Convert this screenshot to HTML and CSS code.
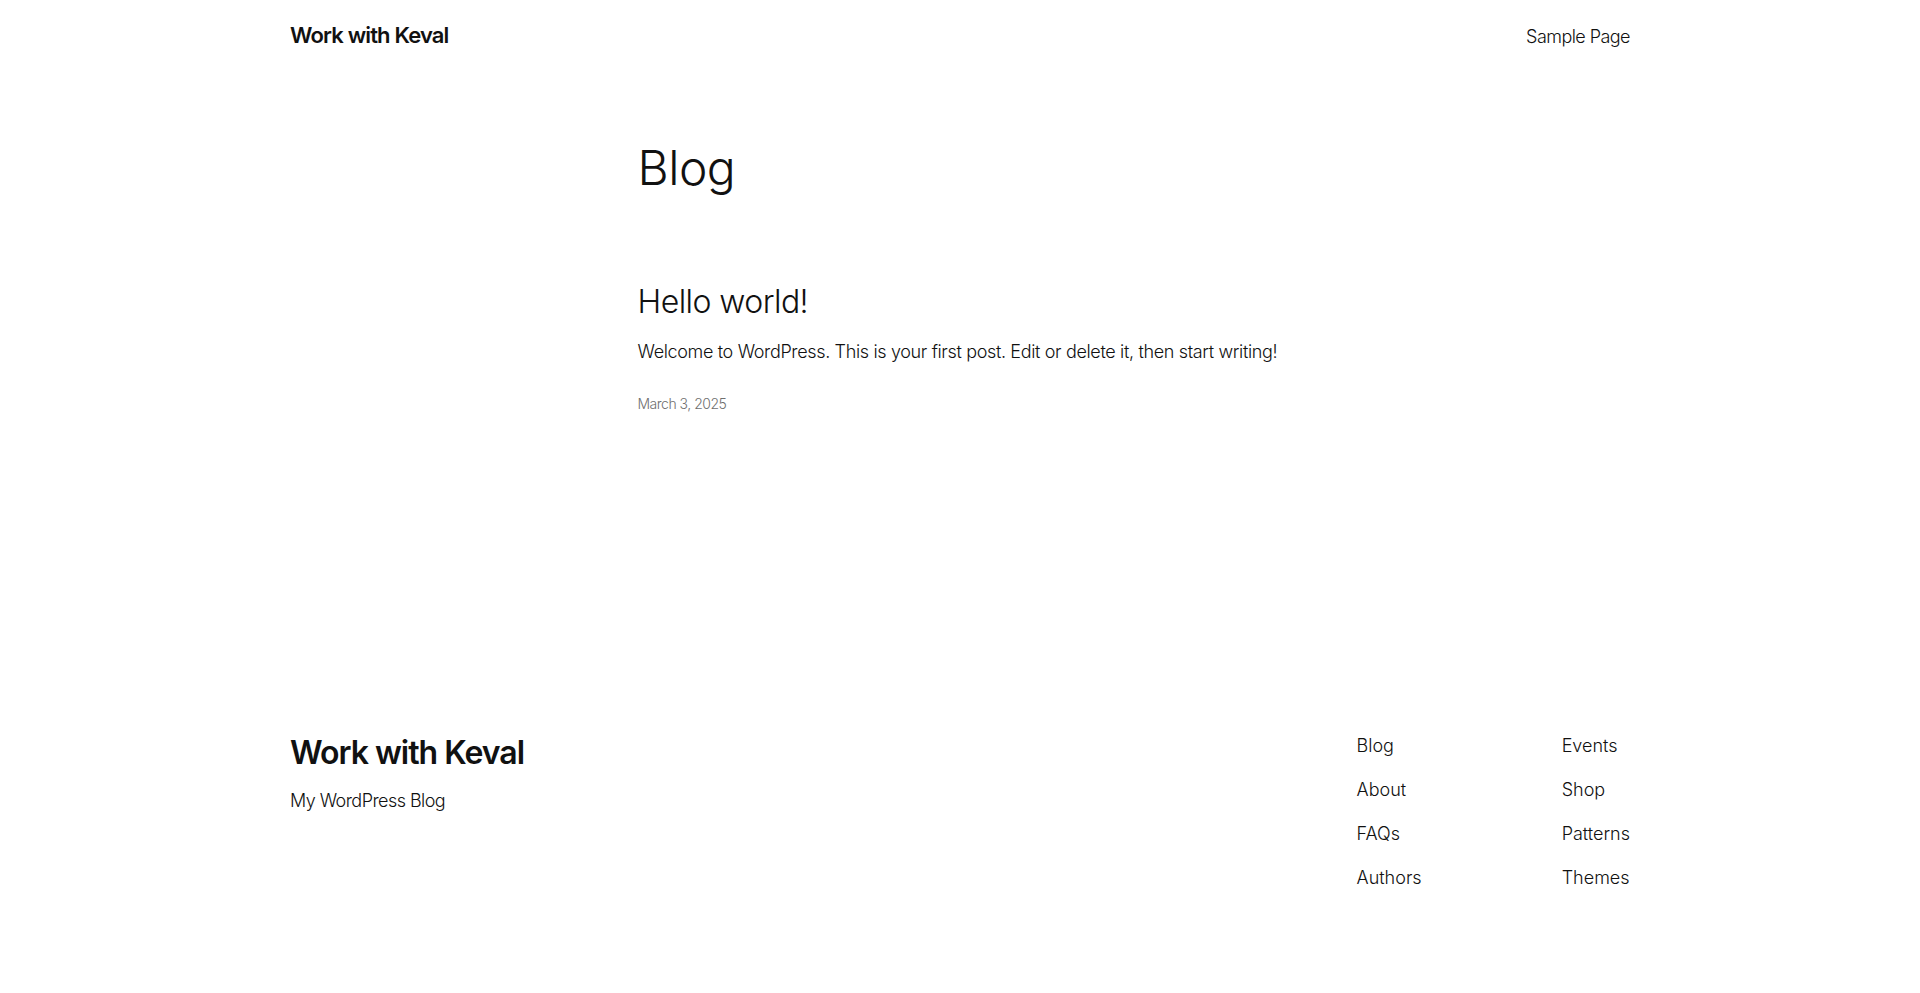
FILE: index.html
```html
<!DOCTYPE html>
<html lang="en">
<head>
<meta charset="utf-8">
<title>Blog – Work with Keval</title>
<link rel="stylesheet" href="styles.css">
</head>
<body>
<header class="site-header">
  <div class="wide header-row">
    <a class="site-title" href="#">Work with Keval</a>
    <nav class="header-nav"><a href="#">Sample Page</a></nav>
  </div>
</header>
<main class="site-main">
  <div class="content">
    <h1 class="page-title">Blog</h1>
    <article class="post">
      <h2 class="post-title"><a href="#">Hello world!</a></h2>
      <p class="post-excerpt">Welcome to WordPress. This is your first post. Edit or delete it, then start writing!</p>
      <div class="post-date">March 3, 2025</div>
    </article>
  </div>
</main>
<footer class="site-footer">
  <div class="wide footer-row">
    <div class="footer-brand">
      <a class="footer-title" href="#">Work with Keval</a>
      <p class="tagline">My WordPress Blog</p>
    </div>
    <div class="footer-navs">
      <ul class="footer-nav">
        <li><a href="#">Blog</a></li>
        <li><a href="#">About</a></li>
        <li><a href="#">FAQs</a></li>
        <li><a href="#">Authors</a></li>
      </ul>
      <ul class="footer-nav">
        <li><a href="#">Events</a></li>
        <li><a href="#">Shop</a></li>
        <li><a href="#">Patterns</a></li>
        <li><a href="#">Themes</a></li>
      </ul>
    </div>
  </div>
</footer>
</body>
</html>
```

FILE: styles.css
```css
* { box-sizing: border-box; }
html, body { margin: 0; padding: 0; }
body {
  background: #ffffff;
  color: #111111;
  font-family: Inter, "Open Sans", "Liberation Sans", sans-serif;
  font-weight: 300;
  font-size: 18px;
}
a { color: inherit; text-decoration: none; }

.wide {
  max-width: 1340px;
  margin: 0 auto;
}

/* Header */
.site-header { padding: 20px 0; }
.header-row {
  display: flex;
  justify-content: space-between;
  align-items: baseline;
}
.site-title {
  font-size: 22px;
  font-weight: 600;
  line-height: 30px;
  letter-spacing: -0.85px;
}
.header-nav a {
  font-size: 18px;
  line-height: 30px;
  letter-spacing: -0.55px;
}

/* Main */
.site-main { padding-top: 69px; padding-bottom: 317px; }
.content {
  width: 645px;
  margin: 0 auto;
}
.page-title {
  margin: 0;
  font-size: 48px;
  font-weight: 300;
  line-height: 54px;
  letter-spacing: -0.5px;
}
.post { margin-top: 88px; }
.post-title {
  margin: 0;
  font-size: 32px;
  font-weight: 300;
  line-height: 38px;
  letter-spacing: -0.55px;
}
.post-excerpt {
  margin: 16px 0 0;
  font-size: 18px;
  line-height: 29px;
  letter-spacing: -0.35px;
  white-space: nowrap;
}
.post-date {
  margin-top: 28px;
  font-size: 14px;
  line-height: 20px;
  color: #6f6f6f;
  letter-spacing: -0.5px;
}

/* Footer */
.site-footer { padding-bottom: 60px; }
.footer-row {
  display: flex;
  justify-content: space-between;
  align-items: flex-start;
}
.footer-brand { padding-top: 3px; }
.footer-title {
  display: block;
  font-size: 32px;
  font-weight: 600;
  line-height: 38px;
  letter-spacing: -1px;
}
.tagline {
  margin: 14px 0 0;
  font-size: 18px;
  line-height: 29px;
  letter-spacing: -0.55px;
}
.footer-navs {
  display: flex;
  gap: 140px;
}
.footer-nav {
  list-style: none;
  margin: 0;
  padding: 0;
  display: flex;
  flex-direction: column;
  gap: 15px;
}
.footer-nav li {
  font-size: 18px;
  line-height: 29px;
  letter-spacing: 0;
}
```
